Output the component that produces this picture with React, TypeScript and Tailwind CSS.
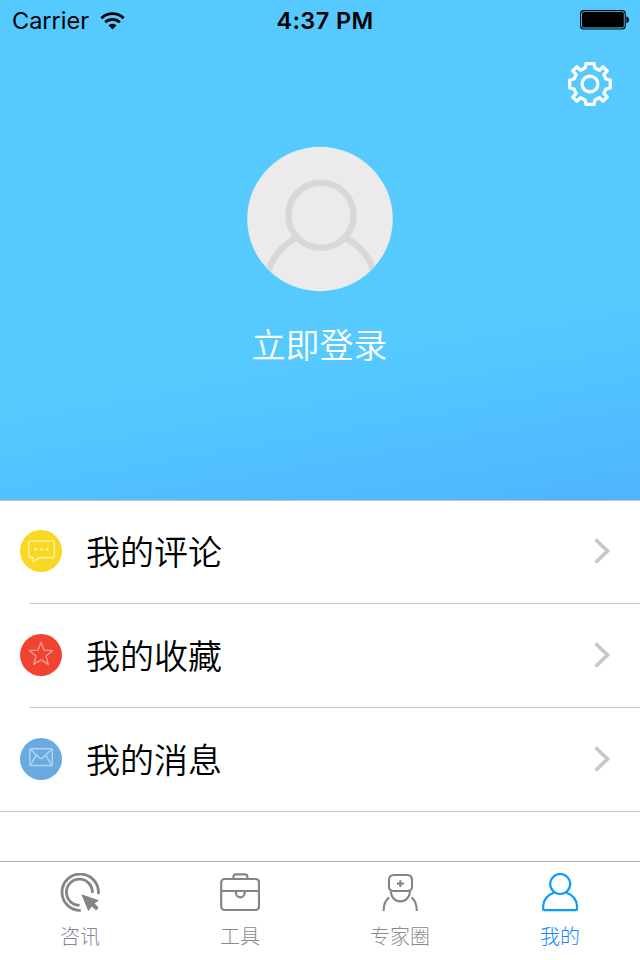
import type { ReactNode } from 'react';

type MenuItem = {
  label: string;
  icon: ReactNode;
};

type TabItem = {
  label: string;
  icon: ReactNode;
  active?: boolean;
};

const gearPath =
  'M-4 -20.3 H4 L5 -16 L9.5 -13.8 L13.2 -17.2 L17.2 -13.2 L13.8 -9.5 L16 -5 L20.3 -4 V4 L16 5 L13.8 9.5 L17.2 13.2 L13.2 17.2 L9.5 13.8 L5 16 L4 20.3 H-4 L-5 16 L-9.5 13.8 L-13.2 17.2 L-17.2 13.2 L-13.8 9.5 L-16 5 L-20.3 4 V-4 L-16 -5 L-13.8 -9.5 L-17.2 -13.2 L-13.2 -17.2 L-9.5 -13.8 L-5 -16 Z';

const menuItems: MenuItem[] = [
  {
    label: '我的评论',
    icon: (
      <svg className="size-[42px]" viewBox="0 0 42 42" fill="none">
        <circle cx="21" cy="21" r="21" fill="#f8d823" />
        <g stroke="#fcee9c" strokeWidth="1.6" strokeLinejoin="round">
          <path d="M10.3 11 H32.7 Q34.3 11 34.3 12.6 V26 Q34.3 27.6 32.7 27.6 H19.5 L13.2 31.6 V27.6 H10.3 Q8.7 27.6 8.7 26 V12.6 Q8.7 11 10.3 11 Z" />
        </g>
        <g fill="#fcee9c">
          <circle cx="15.6" cy="19.3" r="1.6" />
          <circle cx="21.5" cy="19.3" r="1.6" />
          <circle cx="27.4" cy="19.3" r="1.6" />
        </g>
      </svg>
    ),
  },
  {
    label: '我的收藏',
    icon: (
      <svg className="size-[42px]" viewBox="0 0 42 42" fill="none">
        <circle cx="21" cy="21" r="21" fill="#f14331" />
        <path
          d="M21 8.3 L24.1 16.2 L32.6 16.7 L26 22.1 L28.3 30.4 L21 25.8 L13.7 30.4 L16 22.1 L9.4 16.7 L17.9 16.2 Z"
          stroke="#f99f96"
          strokeWidth="1.3"
          strokeLinejoin="round"
        />
      </svg>
    ),
  },
  {
    label: '我的消息',
    icon: (
      <svg className="size-[42px]" viewBox="0 0 42 42" fill="none">
        <circle cx="21" cy="21" r="21" fill="#69abe0" />
        <g stroke="#b1d5f1" strokeWidth="1.4" strokeLinejoin="round">
          <rect x="9.8" y="10.7" width="22.5" height="16.8" rx="1" />
          <path d="M10.3 11.2 L19 19.6 Q21 21.3 23 19.6 L31.8 11.2" />
          <path d="M10.5 27 L16.2 17.2 M31.6 27 L25.8 17.2" />
        </g>
      </svg>
    ),
  },
];

const tabItems: TabItem[] = [
  {
    label: '咨讯',
    icon: (
      <svg className="size-10" viewBox="0 0 40 40" fill="none">
        <g stroke="currentColor" strokeWidth="2.8">
          <path d="M20.8 37.4 A18.2 18.2 0 1 1 38.3 21.2" />
          <path d="M19.6 32.2 A13 13 0 1 1 32.4 20" />
        </g>
        <path
          d="M21.3 21.3 L39 27.2 L34.6 30.6 L38.7 34.6 L36.2 37.4 L31.8 33.4 L28.3 38.3 Z"
          fill="currentColor"
        />
      </svg>
    ),
  },
  {
    label: '工具',
    icon: (
      <svg className="size-10" viewBox="0 0 40 40" fill="none" stroke="currentColor" strokeWidth="2.2">
        <rect x="1.2" y="6" width="37.8" height="31" rx="3.2" />
        <path d="M13.5 6 V3.6 Q13.5 1.3 15.8 1.3 H25 Q27.3 1.3 27.3 3.6 V6" />
        <path d="M1 18 H39" />
        <path d="M16 18.5 V20 A4.3 4.3 0 0 0 24.6 20 V18.5" />
      </svg>
    ),
  },
  {
    label: '专家圈',
    icon: (
      <svg className="size-10" viewBox="0 0 40 40" fill="none" stroke="currentColor" strokeWidth="2.1">
        <path d="M14 2 H27 Q32 2 32 7 V13.6 Q32 17.8 28 18 H13 Q9 17.8 9 13.6 V7 Q9 2 14 2 Z" />
        <path d="M20.4 7.2 V14 M17 10.6 H23.8" />
        <path d="M10.8 18.2 C11 24 15 28.4 20.4 28.4 C25.8 28.4 29.8 24 30 18.2" />
        <path d="M9 24.4 C5.4 27.4 3.6 32 3.6 38 M31.6 24.4 C35.2 27.4 36.8 32 36.8 38" />
      </svg>
    ),
  },
  {
    label: '我的',
    active: true,
    icon: (
      <svg className="size-10" viewBox="0 0 40 40" fill="none" stroke="#0a9cff" strokeWidth="2.2">
        <circle cx="20.2" cy="11" r="10" />
        <path d="M14 19.4 C7.4 22 3.2 27.4 3.2 32.8 V35.4 Q3.2 37.2 5 37.2 H35.2 Q37 37.2 37 35.4 V32.8 C37 27.4 32.8 22 26.4 19.4" />
      </svg>
    ),
  },
];

function StatusBar() {
  return (
    <div className="grid h-10 grid-cols-3 items-center pl-3 pr-[10px] font-['Inter',sans-serif] text-black">
      <div className="flex items-center gap-[11px] pt-px">
        <span className="text-[23.5px]">Carrier</span>
        <svg className="h-[18px] w-[25px]" viewBox="0 0 26 18" fill="none" stroke="#000">
          <path d="M1.4 6.1 A16.5 16.5 0 0 1 24.6 6.1" strokeWidth="3" />
          <path d="M5.4 10.3 A11 11 0 0 1 20.6 10.3" strokeWidth="2.8" />
          <path d="M13 17.8 L8.8 13.5 A6.1 6.1 0 0 1 17.2 13.5 Z" fill="#000" stroke="none" />
        </svg>
      </div>
      <span className="pl-2 pt-0.5 text-center text-[23.5px] font-semibold tracking-[0.4px]">4:37 PM</span>
      <svg className="h-5 w-[50px] justify-self-end" viewBox="0 0 50 20" fill="none">
        <rect x="0.6" y="0.6" width="44.6" height="18.4" rx="3" stroke="#000" strokeWidth="1.1" />
        <rect x="2" y="2" width="41.8" height="15.6" rx="1.6" fill="#000" />
        <path d="M46.4 6.3 Q49 7 49 9.8 Q49 12.6 46.4 13.3 Z" fill="#000" />
      </svg>
    </div>
  );
}

function ProfileHeader() {
  return (
    <header className="flex h-[500px] flex-col bg-[linear-gradient(170deg,#56c9ff_67%,#50bdff_88%,#4fb5fc_100%)]">
      <StatusBar />
      <div className="flex justify-end pr-7 pt-[22px]">
        <button type="button" aria-label="设置">
          <svg
            className="size-11"
            viewBox="-22 -22 44 44"
            fill="none"
            stroke="#fff"
            strokeWidth="3.3"
            strokeLinejoin="round"
          >
            <path d={gearPath} />
            <circle r="7.9" />
          </svg>
        </button>
      </div>
      <div className="mt-10 flex flex-col items-center">
        <svg className="h-[146px] w-[146px]" viewBox="0 0 146 146" fill="none">
          <defs>
            <clipPath id="avatar">
              <ellipse cx="73" cy="73" rx="72.8" ry="72.2" />
            </clipPath>
          </defs>
          <g clipPath="url(#avatar)">
            <rect width="146" height="146" fill="#ebebeb" />
            <g stroke="#d8d8d8" strokeWidth="6.4">
              <circle cx="74" cy="69.3" r="32.6" />
              <path d="M50.5 91.5 C36 98 25 111 19.5 130 M97 91.5 C112 98 123 111 128.5 130" />
            </g>
          </g>
        </svg>
        <button type="button" className="mt-[27px] pr-px text-[34px] font-[350] leading-[50px] text-white">
          立即登录
        </button>
      </div>
    </header>
  );
}

function MenuRow({ item, last }: { item: MenuItem; last: boolean }) {
  return (
    <li>
      <div className="flex h-[102px] items-center pb-0.5 pl-5 pr-[29px]">
        {item.icon}
        <span className="ml-6 flex-1 text-[34px] font-[350] leading-[50px] text-black">{item.label}</span>
        <svg className="h-[26px] w-[18px]" viewBox="0 0 18 26" fill="none">
          <path d="M2.5 1.5 L14.5 13 L2.5 24.5" stroke="#c7c7cc" strokeWidth="3.8" />
        </svg>
      </div>
      <div className={last ? 'h-px bg-[#c8c7cc]' : 'ml-[30px] h-px bg-[#c8c7cc]'} />
      <div className="h-px" />
    </li>
  );
}

export default function App() {
  return (
    <div className="flex h-[960px] w-[640px] flex-col overflow-hidden bg-white font-['Noto_Sans_CJK_SC',sans-serif]">
      <ProfileHeader />
      <ul className="flex-1 border-t border-[#c8c7cc]">
        {menuItems.map((item, index) => (
          <MenuRow key={item.label} item={item} last={index === menuItems.length - 1} />
        ))}
      </ul>
      <nav className="grid h-[99px] grid-cols-4 border-t border-[#adadad] bg-white">
        {tabItems.map((tab) => (
          <button
            key={tab.label}
            type="button"
            className="flex flex-col items-center pt-[11px] text-[#858585]"
          >
            {tab.icon}
            <span
              className={`mt-2 text-[20px] font-light leading-[30px] ${tab.active ? 'text-[#1585ff]' : 'text-[#8a8a8e]'}`}
            >
              {tab.label}
            </span>
          </button>
        ))}
      </nav>
    </div>
  );
}
